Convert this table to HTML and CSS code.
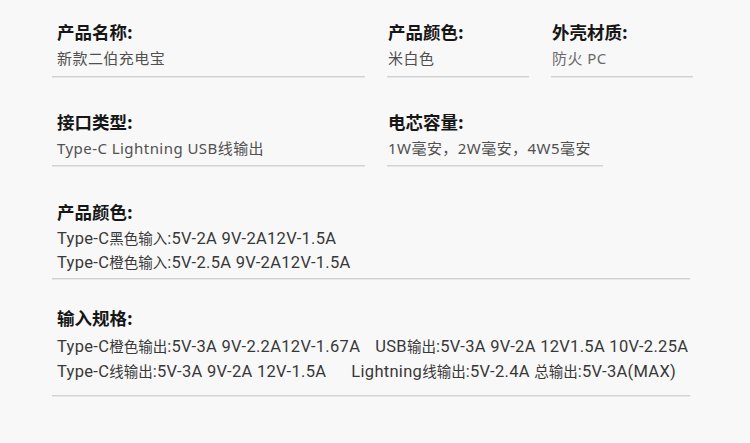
FILE: index.html
```html
<!DOCTYPE html>
<html lang="zh">
<head>
<meta charset="utf-8">
<link rel="stylesheet" href="styles.css">
</head>
<body>
<div class="page">
  <div class="row row1">
    <div class="field w-main">
      <div class="title">产品名称:</div>
      <div class="value">新款二伯充电宝</div>
    </div>
    <div class="field w-small">
      <div class="title">产品颜色:</div>
      <div class="value">米白色</div>
    </div>
    <div class="field w-small">
      <div class="title">外壳材质:</div>
      <div class="value light">防火 PC</div>
    </div>
  </div>
  <div class="row row2">
    <div class="field w-main">
      <div class="title">接口类型:</div>
      <div class="value">Type-C Lightning USB线输出</div>
    </div>
    <div class="field w-mid">
      <div class="title">电芯容量:</div>
      <div class="value">1W毫安，2W毫安，4W5毫安</div>
    </div>
  </div>
  <div class="row row3">
    <div class="field w-full">
      <div class="title">产品颜色:</div>
      <div class="spec">Type-C<span class="c">黑色输入</span>:5V-2A 9V-2A12V-1.5A</div>
      <div class="spec">Type-C<span class="c">橙色输入</span>:5V-2.5A 9V-2A12V-1.5A</div>
    </div>
  </div>
  <div class="row row4">
    <div class="field w-full">
      <div class="title">输入规格:</div>
      <div class="spec"><span class="seg a1">Type-C<span class="c">橙色输出</span>:5V-3A 9V-2.2A12V-1.67A</span><span class="seg">USB<span class="c">输出</span>:5V-3A 9V-2A 12V1.5A 10V-2.25A</span></div>
      <div class="spec"><span class="seg a2">Type-C<span class="c">线输出</span>:5V-3A 9V-2A 12V-1.5A</span><span class="seg">Lightning<span class="c">线输出</span>:5V-2.4A <span class="c">总输出</span>:5V-3A(MAX)</span></div>
    </div>
  </div>
</div>
</body>
</html>
```
FILE: styles.css
```css
html, body {
  margin: 0;
  padding: 0;
  background: #f8f8f8;
}
body {
  width: 750px;
  height: 443px;
  overflow: hidden;
  font-family: "Noto Sans CJK SC", "Noto Sans", sans-serif;
  color: #1a1a1a;
}
.page {
  padding: 20px 0 0 52px;
  display: flex;
  flex-direction: column;
}
.row {
  display: flex;
  gap: 22px;
}
.row2 { margin-top: 33px; }
.row3 { margin-top: 34px; }
.row4 { margin-top: 27px; }
.field {
  border-bottom: 1px solid #d2d2d2;
  box-shadow: 0 1px 0 #e6e6e6;
  padding-bottom: 6px;
  box-sizing: border-box;
}
.w-main, .w-full { padding-left: 5px; }
.w-small, .w-mid { padding-left: 1px; }
.row1 .field { padding-bottom: 7px; }
.w-main { width: 313px; }
.w-small { width: 142px; }
.w-mid { width: 216px; }
.w-full { width: 638px; }
.row3 .field { padding-bottom: 4px; }
.row4 .field { padding-bottom: 11px; }
.title {
  font-size: 17.5px;
  font-weight: 700;
  line-height: 24px;
  color: #161616;
}
.value {
  margin-top: 3px;
  font-family: "Noto Sans", "Noto Sans CJK SC", sans-serif;
  font-size: 15px;
  letter-spacing: 0.45px;
  line-height: 22px;
  color: #505050;
}
.value.light { color: #6a6a6a; }
.spec {
  font-family: Roboto, "Noto Sans CJK SC", sans-serif;
  font-size: 16.5px;
  letter-spacing: 0.3px;
  line-height: 23px;
  color: #383838;
  white-space: nowrap;
}
.spec .c {
  font-family: "Noto Sans CJK SC", sans-serif;
  font-size: 14.5px;
  letter-spacing: 0;
}
.row3 .title { margin-bottom: 2px; }
.row4 .spec { line-height: 24px; }
.row4 .title { margin-bottom: 4px; }
.seg.a1 { margin-right: 15px; }
.seg.a2 { margin-right: 25px; }
```
